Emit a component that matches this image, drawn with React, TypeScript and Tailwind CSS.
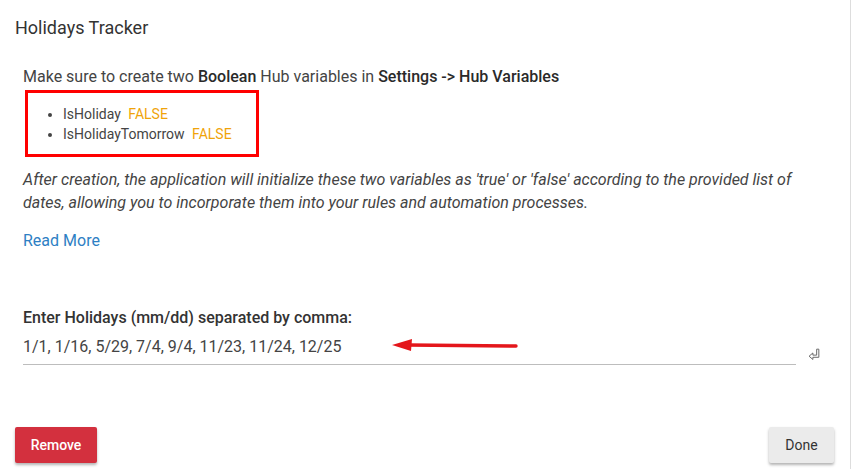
export default function App() {
  return (
    <div
      className="relative flex h-[469px] w-[851px] flex-col overflow-hidden border-r border-[#dddddd] bg-white text-[#444]"
      style={{ fontFamily: 'Roboto, "Noto Sans", sans-serif' }}
    >
      {/* Header */}
      <div className="px-[15px] pt-[16px]">
        <h2 className="text-[18px] leading-[24px] text-[#333]">Holidays Tracker</h2>
      </div>

      {/* Body */}
      <div className="px-[23px] pt-[26px]">
        <p className="text-[16px] leading-[22px] text-[#444]">
          Make sure to create two <b className="font-medium text-[#2a2a2a]">Boolean</b> Hub variables in{' '}
          <b className="font-medium text-[#2a2a2a]">Settings -&gt; Hub Variables</b>
        </p>

        <div className="ml-[2px] mt-[2px] w-[234px] border-[3px] border-[#ff0000] pb-[10px] pt-[11px]">
          <ul className="list-disc pl-[35px] text-[14px] leading-[20px] text-[#444]">
            <li>
              IsHoliday <span className="ml-[4px] text-[#f0a30a]">FALSE</span>
            </li>
            <li>
              IsHolidayTomorrow <span className="ml-[4px] text-[#f0a30a]">FALSE</span>
            </li>
          </ul>
        </div>

        <p className="mt-[11px] text-[16px] italic leading-[23px] text-[#444]">
          After creation, the application will initialize these two variables as 'true' or 'false' according to the provided list of
          dates, allowing you to incorporate them into your rules and automation processes.
        </p>

        <a href="#" className="mt-[16px] block text-[16px] leading-[22px] text-[#2e7fc4]">
          Read More
        </a>

        <label className="mt-[55px] block text-[16px] font-medium leading-[22px] text-[#333]">
          Enter Holidays (mm/dd) separated by comma:
        </label>

        <div className="flex items-end gap-[12px]">
          <div className="relative w-[773px] border-b border-[#bdbdbd] pb-[6px] pt-[7px]">
            <div className="text-[16px] leading-[22px] text-[#444]">1/1, 1/16, 5/29, 7/4, 9/4, 11/23, 11/24, 12/25</div>
            {/* annotation arrow */}
            <svg className="absolute left-[369px] top-[9px]" width="128" height="16" viewBox="0 0 128 16">
              <polygon points="0,7 20,1 19,13" fill="#e4161b" />
              <path d="M16 7 L124 8" stroke="#e4161b" strokeWidth="3.4" strokeLinecap="round" fill="none" />
            </svg>
          </div>
          <svg className="mb-[5px]" width="13" height="13" viewBox="0 0 12 12">
            <polygon
              points="1,8.5 4.5,5.5 4.5,7.5 8,7.5 8,2 10,2 10,9.5 4.5,9.5 4.5,11.5"
              fill="none"
              stroke="#666"
              strokeWidth="0.9"
              strokeLinejoin="round"
            />
          </svg>
        </div>
      </div>

      {/* Footer */}
      <div className="mt-auto flex items-center justify-between pb-[6px] pl-[15px] pr-[16px]">
        <button className="h-[36px] w-[82px] rounded-[2px] bg-[#d3303e] text-[14px] font-medium text-white shadow-[0_2px_3px_rgba(0,0,0,0.3)]">
          Remove
        </button>
        <button className="h-[36px] w-[65px] rounded-[2px] bg-[#ebebeb] text-[14px] text-[#333] shadow-[0_2px_3px_rgba(0,0,0,0.3)]">
          Done
        </button>
      </div>
    </div>
  )
}
